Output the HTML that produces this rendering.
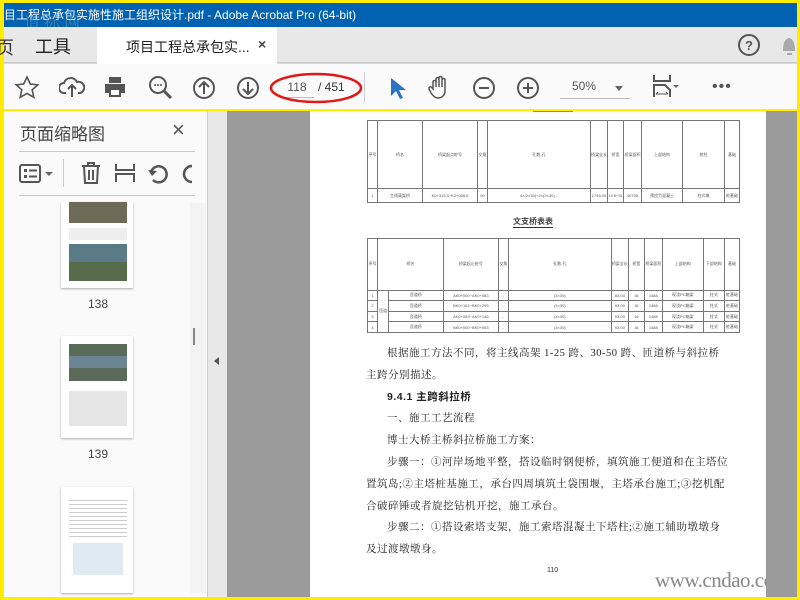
<!DOCTYPE html>
<html><head><meta charset="utf-8"><style>
*{margin:0;padding:0;box-sizing:border-box}
body{width:800px;height:600px;overflow:hidden;background:#ffec00;position:relative;font-family:"Liberation Sans","Noto Sans CJK SC",sans-serif}
.abs{position:absolute}
#title{left:4px;top:3px;width:793px;height:24px;background:#0062b1;color:#fff;font-size:12px;line-height:24px;white-space:nowrap;overflow:hidden}
#tabs{left:4px;top:27px;width:793px;height:36px;background:#e8e8e8;border-bottom:1px solid #ccc}
#tab{left:97px;top:27px;width:180px;height:37px;background:#fff}
#tb{left:4px;top:64px;width:793px;height:46px;background:#fafafa;border-bottom:1px solid #ddd}
#left{left:4px;top:111px;width:204px;height:486px;background:#fafafa;border-right:1px solid #ccc}
#strip{left:208px;top:111px;width:19px;height:486px;background:#e8e8e8}
#gray{left:227px;top:111px;width:570px;height:486px;background:#9b9b9b}
#page{left:310px;top:111px;width:456px;height:486px;background:#fff;overflow:hidden}
svg{position:absolute}
table{border-collapse:collapse;position:absolute;font-size:4px;color:#555;text-align:center}
td{border:1px solid #777;height:8px}
.p{position:absolute;font-family:"Liberation Serif","Noto Serif CJK SC",serif;font-size:10.5px;color:#222;letter-spacing:0.5px;white-space:nowrap}
.th{position:absolute;background:#fff;box-shadow:0 1px 2px #aaa;overflow:hidden}
</style></head><body>
<div id="title" class="abs">目工程总承包实施性施工组织设计.pdf - Adobe Acrobat Pro (64-bit)</div>
<div class="abs" style="left:24px;top:10px;font-size:16px;color:#8899aa;opacity:.5;letter-spacing:4px;font-family:'Noto Serif CJK SC',serif">道标网</div>
<div id="tabs" class="abs"></div>
<div class="abs" style="left:-4px;top:34px;font-size:18px;color:#333">页</div>
<div class="abs" style="left:35px;top:33px;font-size:18px;color:#222">工具</div>
<div id="tab" class="abs"></div>
<div class="abs" style="left:126px;top:37px;font-size:14px;color:#222">项目工程总承包实...</div>
<div class="abs" style="left:258px;top:36px;font-size:14px;color:#444;font-weight:bold">×</div>
<svg style="left:737px;top:33px" width="24" height="24"><circle cx="12" cy="12" r="10" fill="none" stroke="#555" stroke-width="2"/><text x="12" y="17" font-size="13" font-weight="bold" text-anchor="middle" fill="#555" font-family="Liberation Sans">?</text></svg>
<svg style="left:780px;top:33px" width="17" height="24"><path d="M3 18 Q3 6 9 5 Q15 6 15 18 Z M7 20h5v2h-5z" fill="#aaa"/></svg>
<div id="tb" class="abs"></div>
<svg style="left:14px;top:75px" width="26" height="26"><path d="M13 2l3.3 7 7.5.8-5.6 5 1.6 7.5L13 18.4 6.2 22.3l1.6-7.5-5.6-5 7.5-.8z" fill="none" stroke="#555" stroke-width="1.6"/></svg>
<svg style="left:59px;top:76px" width="26" height="24"><path d="M7 17H5a5 5 0 0 1 0-10 7 7 0 0 1 13-1 5 5 0 0 1 3 11h-2M13 21V9M9 13l4-4 4 4" fill="none" stroke="#555" stroke-width="2"/></svg>
<svg style="left:103px;top:75px" width="24" height="24"><path d="M6 2h12v6H6z M2 9h20v9h-4v4H6v-4H2z" fill="#555"/><rect x="8" y="15" width="8" height="5" fill="#fff"/></svg>
<svg style="left:148px;top:75px" width="26" height="26"><circle cx="10" cy="10" r="8" fill="none" stroke="#555" stroke-width="2"/><path d="M16 16l7 7" stroke="#555" stroke-width="3"/><circle cx="7" cy="10" r="1" fill="#555"/><circle cx="10" cy="10" r="1" fill="#555"/><circle cx="13" cy="10" r="1" fill="#555"/></svg>
<svg style="left:192px;top:76px" width="24" height="24"><circle cx="12" cy="12" r="10" fill="none" stroke="#555" stroke-width="2"/><path d="M12 18V6M7 11l5-5 5 5" fill="none" stroke="#555" stroke-width="2"/></svg>
<svg style="left:236px;top:76px" width="24" height="24"><circle cx="12" cy="12" r="10" fill="none" stroke="#555" stroke-width="2"/><path d="M12 6v12M7 13l5 5 5-5" fill="none" stroke="#555" stroke-width="2"/></svg>
<div class="abs" style="left:280px;top:80px;width:34px;border-bottom:1px solid #bbb;font-size:12px;color:#555;text-align:center;height:18px">118</div>
<div class="abs" style="left:318px;top:80px;font-size:12px;color:#333">/ 451</div>
<svg style="left:268px;top:70px" width="96" height="36"><ellipse cx="48" cy="18" rx="45" ry="14" fill="none" stroke="#e01818" stroke-width="2.5"/></svg>
<div class="abs" style="left:364px;top:72px;width:1px;height:30px;background:#ccc"></div>
<svg style="left:388px;top:76px" width="18" height="24"><path d="M3 2v18l5-5 4 8 3-1-4-8h7z" fill="#2a73c4"/></svg>
<svg style="left:427px;top:75px" width="26" height="26"><path d="M6 14V7a1.5 1.5 0 0 1 3 0v5V4a1.5 1.5 0 0 1 3 0v8V3a1.5 1.5 0 0 1 3 0v9V5a1.5 1.5 0 0 1 3 0v11c0 4-3 7-7 7-3 0-5-2-7-5l-2-4a1.5 1.5 0 0 1 3-1z" fill="none" stroke="#555" stroke-width="1.5"/></svg>
<svg style="left:472px;top:76px" width="24" height="24"><circle cx="12" cy="12" r="10" fill="none" stroke="#555" stroke-width="2"/><path d="M7 12h10" stroke="#555" stroke-width="2"/></svg>
<svg style="left:516px;top:76px" width="24" height="24"><circle cx="12" cy="12" r="10" fill="none" stroke="#555" stroke-width="2"/><path d="M7 12h10M12 7v10" stroke="#555" stroke-width="2"/></svg>
<div class="abs" style="left:560px;top:79px;width:70px;height:20px;border-bottom:1px solid #bbb;font-size:12px;color:#555;padding-left:12px">50%</div>
<div class="abs" style="left:615px;top:86px;border:4px solid transparent;border-top:5px solid #666"></div>
<svg style="left:652px;top:73px" width="32" height="28"><path d="M2 2v6h16V2M2 24v-12h11l5 5v7" fill="none" stroke="#555" stroke-width="2"/><path d="M4 21h12M4 21l2-2M16 21l-2-2" stroke="#555" stroke-width="1"/><path d="M21 12l3 3 3-3z" fill="#666"/></svg>
<div class="abs" style="left:712px;top:78px;font-size:16px;color:#555;letter-spacing:1px">•••</div>

<div id="left" class="abs"></div>
<div class="abs" style="left:20px;top:120px;font-size:17px;color:#444">页面缩略图</div>
<div class="abs" style="left:172px;top:117px;font-size:22px;color:#555">×</div>
<div class="abs" style="left:19px;top:151px;width:176px;height:1px;background:#ccc"></div>
<div class="abs" style="left:19px;top:195px;width:176px;height:1px;background:#ccc"></div>
<svg style="left:19px;top:163px" width="36" height="22"><rect x="1" y="2" width="20" height="17" rx="2" fill="none" stroke="#555" stroke-width="2"/><rect x="5" y="6" width="3" height="3" fill="#555"/><rect x="5" y="12" width="3" height="3" fill="#555"/><path d="M10 7.5h8M10 13.5h8" stroke="#555" stroke-width="2"/><path d="M26 9l4 4 4-4z" fill="#666"/></svg>
<div class="abs" style="left:63px;top:159px;width:1px;height:28px;background:#ccc"></div>
<svg style="left:80px;top:161px" width="22" height="24"><path d="M2 5h18M8 5V2h6v3M4 5l1 17h12l1-17M9 9v10M13 9v10" fill="none" stroke="#555" stroke-width="2"/></svg>
<svg style="left:114px;top:162px" width="22" height="22"><path d="M2 2v6h18V2M2 20v-8h18v8" fill="none" stroke="#555" stroke-width="2"/></svg>
<svg style="left:147px;top:162px" width="22" height="22"><path d="M6 18a8 8 0 1 0-2-8" fill="none" stroke="#555" stroke-width="2.5"/><path d="M1 8l4 6 5-5z" fill="#555"/></svg>
<svg style="left:180px;top:162px" width="14" height="22"><path d="M12 4a8 8 0 0 0 0 16" fill="none" stroke="#555" stroke-width="2.5"/></svg>
<div class="abs" style="left:190px;top:203px;width:16px;height:390px;background:#f3f3f3"></div>
<div class="abs" style="left:193px;top:328px;width:2px;height:17px;background:#888"></div>
<div class="th" style="left:61px;top:202px;width:72px;height:86px">
<div class="abs" style="left:8px;top:0;width:58px;height:21px;background:#6e6a58"></div>
<div class="abs" style="left:8px;top:26px;width:58px;height:12px;background:#eee"></div>
<div class="abs" style="left:8px;top:42px;width:58px;height:37px;background:#5b7a88"></div>
<div class="abs" style="left:8px;top:60px;width:58px;height:19px;background:#576c4a"></div>
</div>
<div class="abs" style="left:88px;top:297px;font-size:12px;color:#444">138</div>
<div class="th" style="left:61px;top:336px;width:72px;height:102px">
<div class="abs" style="left:8px;top:8px;width:58px;height:37px;background:#5a6b5a"></div>
<div class="abs" style="left:8px;top:20px;width:58px;height:12px;background:#6b8592"></div>
<div class="abs" style="left:8px;top:55px;width:58px;height:35px;background:#e6e6e6"></div>
</div>
<div class="abs" style="left:88px;top:447px;font-size:12px;color:#444">139</div>
<div class="th" style="left:61px;top:487px;width:72px;height:106px">
<div class="abs" style="left:8px;top:10px;width:58px;height:40px;background:repeating-linear-gradient(#fff 0 3px,#ccc 3px 4px)"></div>
<div class="abs" style="left:12px;top:56px;width:50px;height:32px;background:#dfeaf3"></div>
</div>
<div id="strip" class="abs"></div>
<div class="abs" style="left:214px;top:357px;border:4px solid transparent;border-right:5px solid #555;border-left:0"></div>
<div id="gray" class="abs"></div>
<div id="page" class="abs"></div>
<div class="abs" style="left:533px;top:111px;width:40px;height:1px;background:#888"></div>
<table style="left:367px;top:120px;width:373px;height:83px">
<tr style="height:40px"><td style="width:10px">序号</td><td style="width:45px">桥名</td><td style="width:55px">桥梁起点桩号</td><td style="width:10px">交角</td><td style="width:103px">孔数-孔</td><td style="width:17px">桥梁全长</td><td style="width:16px">桥宽</td><td style="width:18px">桥梁面积</td><td style="width:41px">上部结构</td><td>桩柱</td><td style="width:15px">基础</td></tr>
<tr><td>1</td><td>主线高架桥</td><td>K0+313.5~K2+058.5</td><td>90</td><td>4×(2×30)+2×(3×30)...</td><td>1745.00</td><td>13.5~51</td><td>40705</td><td>预应力混凝土</td><td>柱式墩</td><td>桩基础</td></tr>
</table>
<div class="abs" style="left:513px;top:216px;font-size:8px;color:#444;border-bottom:1px solid #333;font-weight:bold">文支桥表表</div>
<table style="left:367px;top:238px;width:373px;height:95px">
<tr style="height:39px"><td style="width:10px">序号</td><td colspan="2" style="width:55px">桥名</td><td style="width:55px">桥梁起止桩号</td><td style="width:10px">交角</td><td style="width:103px">孔数-孔</td><td style="width:17px">桥梁全长</td><td style="width:16px">桥宽</td><td style="width:18px">桥梁面积</td><td style="width:41px">上部结构</td><td>下部结构</td><td style="width:15px">基础</td></tr>
<tr><td>1</td><td rowspan="4" style="width:11px">匝道</td><td>匝道桥</td><td>AK0+000~AK0+083</td><td>-</td><td>(3×30)</td><td>83.00</td><td>16</td><td>1488</td><td>现浇PC箱梁</td><td>柱式</td><td>桩基础</td></tr>
<tr><td>2</td><td>匝道桥</td><td>BK0+162~BK0+295</td><td>-</td><td>(3×30)</td><td>93.00</td><td>16</td><td>1488</td><td>现浇PC箱梁</td><td>柱式</td><td>桩基础</td></tr>
<tr><td>3</td><td>匝道桥</td><td>AK0+053~AK0+146</td><td>-</td><td>(3×30)</td><td>93.00</td><td>16</td><td>1488</td><td>现浇PC箱梁</td><td>柱式</td><td>桩基础</td></tr>
<tr><td>4</td><td>匝道桥</td><td>BK0+000~BK0+093</td><td>-</td><td>(3×30)</td><td>93.00</td><td>16</td><td>1488</td><td>现浇PC箱梁</td><td>柱式</td><td>桩基础</td></tr>
</table>
<div class="p" style="left:387px;top:345px">根据施工方法不同，将主线高架 1-25 跨、30-50 跨、匝道桥与斜拉桥</div>
<div class="p" style="left:366px;top:367px">主跨分别描述。</div>
<div class="p" style="left:387px;top:389px;font-family:'Liberation Sans','Noto Sans CJK SC',sans-serif;font-weight:bold">9.4.1 主跨斜拉桥</div>
<div class="p" style="left:387px;top:410px">一、施工工艺流程</div>
<div class="p" style="left:387px;top:432px">博士大桥主桥斜拉桥施工方案：</div>
<div class="p" style="left:387px;top:454px">步骤一：①河岸场地平整，搭设临时钢便桥，填筑施工便道和在主塔位</div>
<div class="p" style="left:366px;top:476px">置筑岛;②主塔桩基施工，承台四周填筑土袋围堰，主塔承台施工;③挖机配</div>
<div class="p" style="left:366px;top:498px">合破碎锤或者旋挖钻机开挖，施工承台。</div>
<div class="p" style="left:387px;top:519px">步骤二：①搭设索塔支架，施工索塔混凝土下塔柱;②施工辅助墩墩身</div>
<div class="p" style="left:366px;top:541px">及过渡墩墩身。</div>
<div class="abs" style="left:547px;top:567px;font-size:7px;color:#333">110</div>
<div class="abs" style="left:655px;top:568px;width:111px;overflow:hidden;white-space:nowrap;font-size:21px;color:#888;font-family:'Liberation Serif',serif;letter-spacing:-0.5px">www.cndao.com</div>
</body></html>
